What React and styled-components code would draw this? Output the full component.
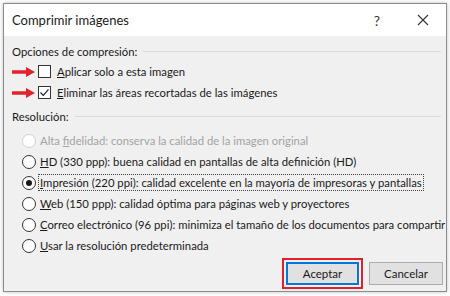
import styled, { createGlobalStyle } from "styled-components";

const GlobalStyle = createGlobalStyle`
  body {
    margin: 0;
    background: #ffffff;
    font-family: Lato, "Noto Sans", sans-serif;
  }
`;

const Page = styled.div`
  padding: 3px;
  width: 450px;
  height: 296px;
  box-sizing: border-box;
`;

const Dialog = styled.div`
  width: 444px;
  height: 289px;
  box-sizing: border-box;
  border: 1px solid #8c8c8c;
  box-shadow: 0 0 4px rgba(0, 0, 0, 0.25);
  display: flex;
  flex-direction: column;
  background: #f0f0f0;
`;

const TitleBar = styled.div`
  height: 32px;
  background: #ffffff;
  display: flex;
  align-items: center;
  padding-left: 8px;
  color: #1a1a1a;
  font-size: 13px;
`;

const Title = styled.div`
  flex: 1;
`;

const TitleButton = styled.div`
  width: 46px;
  height: 32px;
  display: flex;
  align-items: center;
  justify-content: center;
  color: #333;
  font-size: 14px;
`;

const Body = styled.div`
  flex: 1;
  padding: 6px 3px 0 8px;
  display: flex;
  flex-direction: column;
  font-size: 11.3px;
  color: #1a1a1a;
`;

const SectionHeader = styled.div`
  height: 19px;
  display: flex;
  align-items: center;
  gap: 6px;
  margin-top: ${(p) => p.$top || 0}px;
  margin-bottom: ${(p) => p.$bottom || 0}px;

  &::after {
    content: "";
    flex: 1;
    border-top: 1px solid #dadada;
    margin-right: 2px;
  }
`;

const Row = styled.div`
  height: 21px;
  display: flex;
  align-items: center;
  padding-left: ${(p) => p.$indent || 0}px;
  color: ${(p) => (p.$disabled ? "#a3a3a3" : "#1a1a1a")};
`;

const Arrow = styled.svg`
  width: 23px;
  height: 10px;
  margin-right: 3px;
  flex-shrink: 0;
`;

const CheckBox = styled.span`
  width: 13px;
  height: 13px;
  flex-shrink: 0;
  box-sizing: border-box;
  border: 1px solid #333;
  background: #fff;
  display: flex;
  align-items: center;
  justify-content: center;
  margin-right: 4px;
`;

const Radio = styled.span`
  width: 14px;
  height: 14px;
  flex-shrink: 0;
  box-sizing: border-box;
  border-radius: 50%;
  border: 1px solid ${(p) => (p.$disabled ? "#d2d2d2" : "#333")};
  background: #fff;
  display: flex;
  align-items: center;
  justify-content: center;
  margin-right: 2px;

  &::after {
    content: "";
    width: 6px;
    height: 6px;
    border-radius: 50%;
    background: ${(p) => (p.$checked ? "#1a1a1a" : "transparent")};
  }
`;

const Label = styled.span`
  padding: 1px 1px;
  border: 1px ${(p) => (p.$focus ? "dotted #444" : "solid transparent")};
  white-space: nowrap;
`;

const Key = styled.span`
  text-decoration: underline;
`;

const Footer = styled.div`
  display: flex;
  justify-content: flex-end;
  align-items: center;
  gap: 6px;
  margin-top: 2px;
`;

const Highlight = styled.div`
  border: 2px solid #e0202a;
  padding: 2px;
`;

const Button = styled.button`
  width: ${(p) => (p.$primary ? 73 : 74)}px;
  height: 23px;
  box-sizing: border-box;
  font-family: inherit;
  font-size: 11.5px;
  color: #1a1a1a;
  background: #e1e1e1;
  border: ${(p) => (p.$primary ? "2px solid #0078d7" : "1px solid #adadad")};
  padding: 0;
`;

function RedArrow() {
  return (
    <Arrow viewBox="0 0 23 10">
      <path d="M0 3.2 H14 V0 L23 5 L14 10 V6.8 H0 Z" fill="#e3232b" />
    </Arrow>
  );
}

function Check() {
  return (
    <svg width="11" height="11" viewBox="0 0 11 11">
      <path d="M1.5 5.5 L4.3 8.3 L9.5 2.3" stroke="#222" strokeWidth="1.2" fill="none" />
    </svg>
  );
}

const resolutions = [
  { pre: "Alta ", key: "f", tail: "idelidad: conserva la calidad de la imagen original", disabled: true },
  { key: "H", tail: "D (330 ppp): buena calidad en pantallas de alta definición (HD)" },
  { key: "I", tail: "mpresión (220 ppi): calidad excelente en la mayoría de impresoras y pantallas", checked: true },
  { key: "W", tail: "eb (150 ppp): calidad óptima para páginas web y proyectores" },
  { key: "C", tail: "orreo electrónico (96 ppi): minimiza el tamaño de los documentos para compartir" },
  { key: "U", tail: "sar la resolución predeterminada" },
];

export default function App() {
  return (
    <>
      <GlobalStyle />
      <Page>
        <Dialog>
          <TitleBar>
            <Title>Comprimir imágenes</Title>
            <TitleButton>?</TitleButton>
            <TitleButton>
              <svg width="12" height="12" viewBox="0 0 12 12">
                <path d="M1 1 L11 11 M11 1 L1 11" stroke="#333" strokeWidth="1.1" />
              </svg>
            </TitleButton>
          </TitleBar>
          <Body>
            <SectionHeader>Opciones de compresión:</SectionHeader>
            <Row>
              <RedArrow />
              <CheckBox />
              <Label>
                <Key>A</Key>plicar solo a esta imagen
              </Label>
            </Row>
            <Row>
              <RedArrow />
              <CheckBox>
                <Check />
              </CheckBox>
              <Label>
                <Key>E</Key>liminar las áreas recortadas de las imágenes
              </Label>
            </Row>
            <SectionHeader $top={4} $bottom={4}>
              Resolución:
            </SectionHeader>
            {resolutions.map((r, i) => (
              <Row key={i} $indent={10} $disabled={r.disabled}>
                <Radio $disabled={r.disabled} $checked={r.checked} />
                <Label $focus={r.checked}>
                  {r.pre}
                  <Key>{r.key}</Key>
                  {r.tail}
                </Label>
              </Row>
            ))}
            <Footer>
              <Highlight>
                <Button $primary>Aceptar</Button>
              </Highlight>
              <Button>Cancelar</Button>
            </Footer>
          </Body>
        </Dialog>
      </Page>
    </>
  );
}
